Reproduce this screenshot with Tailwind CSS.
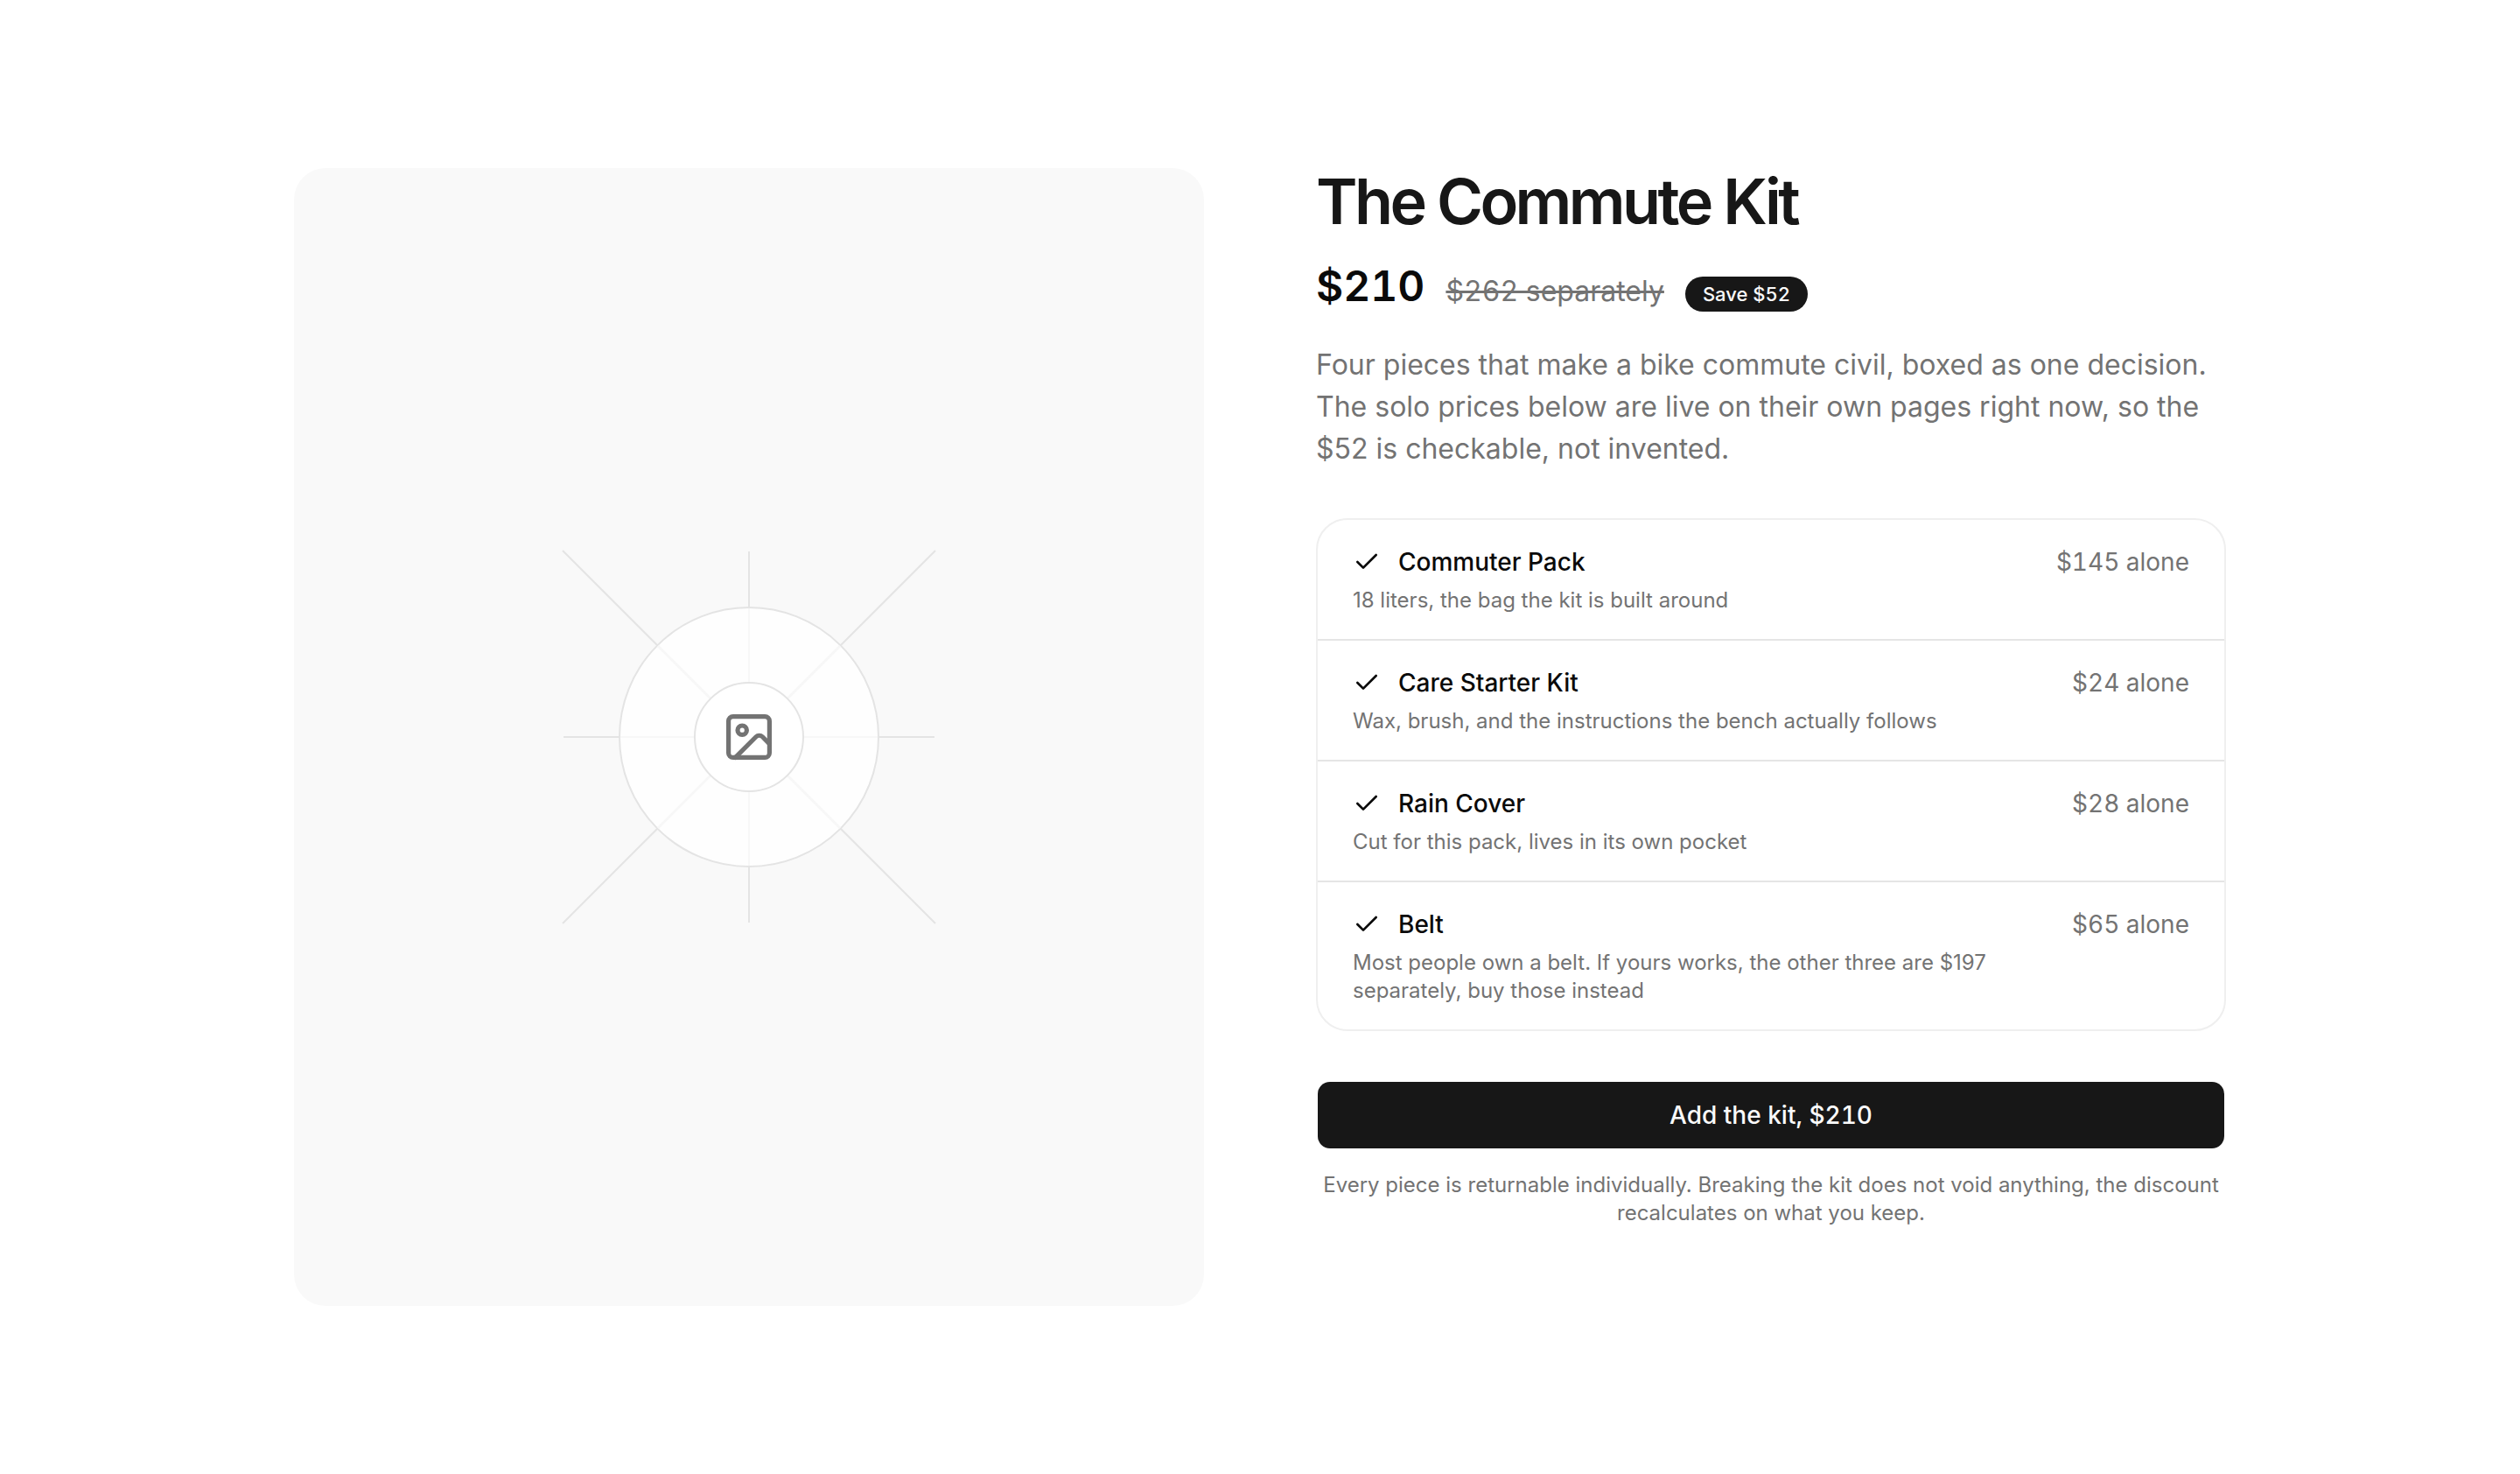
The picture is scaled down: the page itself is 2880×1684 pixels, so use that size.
<!DOCTYPE html>
<html lang="en">
<head>
<meta charset="utf-8">
<meta name="viewport" content="width=device-width, initial-scale=1">
<title>The Commute Kit</title>
<script src="https://cdn.jsdelivr.net/npm/@tailwindcss/browser@4"></script>
</head>
<body class="bg-white font-['Inter',sans-serif] text-neutral-950 antialiased">
<main class="mx-auto grid max-w-[2304px] grid-cols-1 items-start gap-32 px-12 py-48 lg:grid-cols-2">
  <div class="flex aspect-[4/5] items-center justify-center rounded-[36px] bg-[#f9f9f9]">
    <svg class="w-106 max-w-full overflow-visible" viewBox="0 0 424 424" fill="none" role="img" aria-label="Product image placeholder">
      <g stroke="#e4e4e4" stroke-width="2">
        <path d="M212 0V424M0 212H424M-1 -1L425 425M425 -1L-1 425"/>
        <circle cx="212" cy="212" r="148" fill="#fefefe"/>
      </g>
      <g stroke="#f7f7f7">
        <path d="M212 65V359M65 212H359" stroke-width="2"/>
        <path d="M108 108L316 316M316 108L108 316" stroke-width="3"/>
      </g>
      <circle cx="212" cy="212" r="62" fill="#fff" stroke="#e4e4e4" stroke-width="2"/>
      <g transform="translate(180.8 180.8) scale(2.6)" stroke="#737373" stroke-width="2" stroke-linecap="round" stroke-linejoin="round">
        <rect x="3" y="3" width="18" height="18" rx="2"/>
        <circle cx="9" cy="9" r="2"/>
        <path d="m21 15-3.086-3.086a2 2 0 0 0-2.828 0L6 21"/>
      </g>
    </svg>
  </div>

  <section class="flex flex-col">
    <h1 class="text-7xl/[76px] font-semibold tracking-tighter text-neutral-900">The Commute Kit</h1>
    <div class="mt-6 flex flex-wrap items-baseline gap-6">
      <span class="text-5xl/[70px] font-semibold tabular-nums">$210</span>
      <s class="text-[32px]/[48px] text-neutral-500 tabular-nums">$262 separately</s>
      <span class="rounded-full bg-neutral-900 px-5 py-1 text-[22px]/8 font-medium text-neutral-50 tabular-nums">Save $52</span>
    </div>
    <p class="mt-[31px] text-[32px]/[48px] text-neutral-500">Four pieces that make a bike commute civil, boxed as one decision. The solo prices below are live on their own pages right now, so the $52 is checkable, not invented.</p>

    <ul class="mt-[55px] divide-y-2 divide-neutral-200 rounded-[36px] border-2 border-[#efefef]">
      <li class="flex items-start justify-between gap-8 px-10 py-7">
        <div>
          <div class="flex items-center gap-5 text-[28px]/10 font-medium">
            <svg class="size-8 shrink-0" viewBox="0 0 24 24" fill="none" stroke="currentColor" stroke-width="2" stroke-linecap="round" stroke-linejoin="round" aria-hidden="true"><path d="M20 6 9 17l-5-5"/></svg>
            <h2>Commuter Pack</h2>
          </div>
          <p class="mt-2 text-2xl/8 text-neutral-500">18 liters, the bag the kit is built around</p>
        </div>
        <span class="shrink-0 text-[28px]/10 text-neutral-500 tabular-nums">$145 alone</span>
      </li>
      <li class="flex items-start justify-between gap-8 px-10 py-7">
        <div>
          <div class="flex items-center gap-5 text-[28px]/10 font-medium">
            <svg class="size-8 shrink-0" viewBox="0 0 24 24" fill="none" stroke="currentColor" stroke-width="2" stroke-linecap="round" stroke-linejoin="round" aria-hidden="true"><path d="M20 6 9 17l-5-5"/></svg>
            <h2>Care Starter Kit</h2>
          </div>
          <p class="mt-2 text-2xl/8 text-neutral-500">Wax, brush, and the instructions the bench actually follows</p>
        </div>
        <span class="shrink-0 text-[28px]/10 text-neutral-500 tabular-nums">$24 alone</span>
      </li>
      <li class="flex items-start justify-between gap-8 px-10 py-7">
        <div>
          <div class="flex items-center gap-5 text-[28px]/10 font-medium">
            <svg class="size-8 shrink-0" viewBox="0 0 24 24" fill="none" stroke="currentColor" stroke-width="2" stroke-linecap="round" stroke-linejoin="round" aria-hidden="true"><path d="M20 6 9 17l-5-5"/></svg>
            <h2>Rain Cover</h2>
          </div>
          <p class="mt-2 text-2xl/8 text-neutral-500">Cut for this pack, lives in its own pocket</p>
        </div>
        <span class="shrink-0 text-[28px]/10 text-neutral-500 tabular-nums">$28 alone</span>
      </li>
      <li class="flex items-start justify-between gap-8 px-10 py-7">
        <div>
          <div class="flex items-center gap-5 text-[28px]/10 font-medium">
            <svg class="size-8 shrink-0" viewBox="0 0 24 24" fill="none" stroke="currentColor" stroke-width="2" stroke-linecap="round" stroke-linejoin="round" aria-hidden="true"><path d="M20 6 9 17l-5-5"/></svg>
            <h2>Belt</h2>
          </div>
          <p class="mt-2 text-2xl/8 text-neutral-500">Most people own a belt. If yours works, the other three are $197 separately, buy those instead</p>
        </div>
        <span class="shrink-0 text-[28px]/10 text-neutral-500 tabular-nums">$65 alone</span>
      </li>
    </ul>

    <button type="button" class="mt-14 h-20 rounded-2xl border-2 border-transparent bg-neutral-900 bg-clip-padding text-[28px]/10 font-medium text-neutral-50 tabular-nums">Add the kit, $210</button>
    <p class="mt-6 text-center text-2xl/8 text-neutral-500">Every piece is returnable individually. Breaking the kit does not void anything, the discount recalculates on what you keep.</p>
  </section>
</main>
</body>
</html>
